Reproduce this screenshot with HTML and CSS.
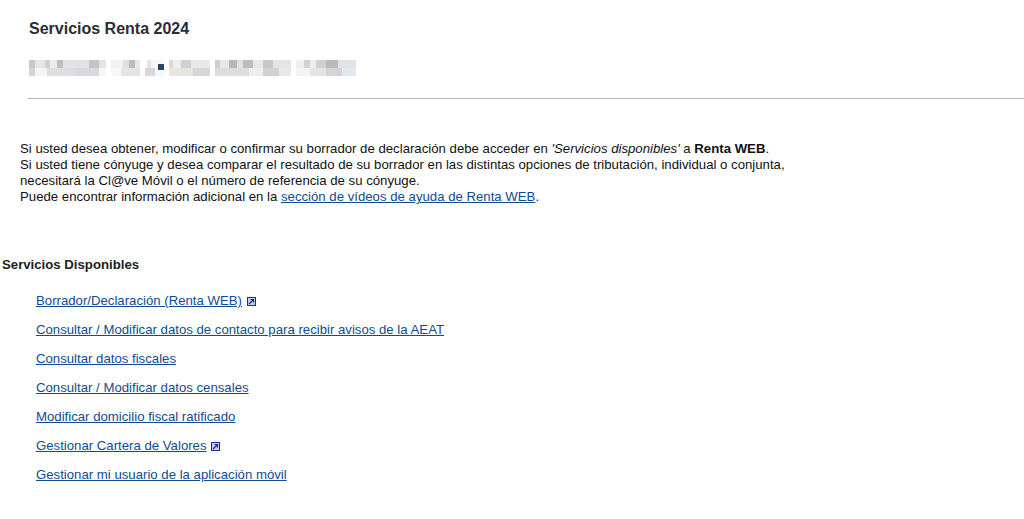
FILE: index.html
```html
<!DOCTYPE html>
<html lang="en">
<head>
  <meta charset="UTF-8" />
  <title>Servicios Renta 2024</title>
  <link rel="stylesheet" href="styles.css">
</head>
<body>
  <header class="head">
    <h1>Servicios Renta 2024</h1>
    <div class="user" aria-hidden="true">
      <span class="blur b1"></span>
      <span class="blur b2"></span>
      <span class="blur b3"><span class="dot"></span></span>
      <span class="blur b4"></span>
      <span class="blur b5"></span>
      <span class="blur b6"></span>
    </div>
  </header>

  <div class="intro">
    Si usted desea obtener, modificar o confirmar su borrador de declaración debe acceder en <em>'Servicios disponibles'</em> a <strong>Renta WEB</strong>.<br>
    Si usted tiene cónyuge y desea comparar el resultado de su borrador en las distintas opciones de tributación, individual o conjunta,<br>
    necesitará la Cl@ve Móvil o el número de referencia de su cónyuge.<br>
    Puede encontrar información adicional en la <a href="#">sección de vídeos de ayuda de Renta WEB</a>.
  </div>

  <h2>Servicios Disponibles</h2>

  <ul class="services">
    <li><a href="#">Borrador/Declaración (Renta WEB)</a>
      <svg class="ext" viewBox="0 0 9 9"><rect x="0.5" y="0.5" width="8" height="8" fill="#c9cbe8" stroke="#1c2f8c"/><path d="M2 7 L6.5 2.5 M3.5 2.5 H6.5 V5.5" fill="none" stroke="#1c2f8c" stroke-width="1.2"/></svg>
    </li>
    <li><a href="#">Consultar / Modificar datos de contacto para recibir avisos de la AEAT</a></li>
    <li><a href="#">Consultar datos fiscales</a></li>
    <li><a href="#">Consultar / Modificar datos censales</a></li>
    <li><a href="#">Modificar domicilio fiscal ratificado</a></li>
    <li><a href="#">Gestionar Cartera de Valores</a>
      <svg class="ext" viewBox="0 0 9 9"><rect x="0.5" y="0.5" width="8" height="8" fill="#c9cbe8" stroke="#1c2f8c"/><path d="M2 7 L6.5 2.5 M3.5 2.5 H6.5 V5.5" fill="none" stroke="#1c2f8c" stroke-width="1.2"/></svg>
    </li>
    <li><a href="#">Gestionar mi usuario de la aplicación móvil</a></li>
  </ul>
</body>
</html>
```

FILE: styles.css
```css
body {
  margin: 0;
  background: #ffffff;
  font-family: "Liberation Sans", Arial, sans-serif;
  font-size: 13.2px;
  color: #111;
  overflow: hidden;
}

.head {
  margin-left: 28px;
  padding-top: 20px;
  height: 78px;
  border-bottom: 1px solid #b5b5b5;
}

h1 {
  margin: 0 0 0 1px;
  font-size: 16px;
  line-height: 18px;
  font-weight: bold;
  color: #2b2d33;
}

.user {
  display: flex;
  gap: 5px;
  margin-top: 22px;
  margin-left: 1px;
  height: 16px;
}

.blur {
  display: block;
  position: relative;
  height: 16px;
  background-color: #eceded;
  background-repeat: no-repeat;
  background-size: 100% 50%;
  background-position: 0 0, 0 100%;
  filter: blur(0.7px);
}

.b1 {
  width: 77px;
  background-image:
    linear-gradient(90deg, #c8c8ca 0 6px, #e6e6e8 6px 16px, #cfcfd0 16px 21px, #ececee 21px 28px, #bdbdc0 28px 34px, #e2e3e6 34px 60px, #c4c4c4 60px 70px, #e4e4e4 70px),
    linear-gradient(90deg, #d4d4d6 0 6px, #f4f4f4 6px 18px, #dedee0 18px 45px, #d8d8dc 45px 70px, #f6f6f6 70px);
}

.b2 {
  width: 29px;
  background-image:
    linear-gradient(90deg, #f2f2f2 0 12px, #dedede 12px 18px, #bdbdbf 18px 24px, #e6e6e6 24px),
    linear-gradient(90deg, #f8f8f8 0 10px, #e4e4e6 10px 29px);
}

.b3 {
  width: 19px;
  background-image:
    linear-gradient(90deg, #fff 0 2px, #e4e4e4 2px 6px, #f8f8f8 6px),
    linear-gradient(90deg, #d8d8da 0 10px, #f6f8fa 10px);
}

.dot {
  position: absolute;
  left: 13px;
  top: 4px;
  width: 6px;
  height: 6px;
  background: #24476a;
}

.b4 {
  width: 41px;
  background-image:
    linear-gradient(90deg, #dcd8d2 0 4px, #eeeeee 4px 12px, #d0d0d2 12px 22px, #e8e8e8 22px),
    linear-gradient(90deg, #e8e4de 0 24px, #d6d6d8 24px 41px);
}

.b5 {
  width: 76px;
  background-image:
    linear-gradient(90deg, #cfcfd0 0 5px, #e8e8ea 5px 14px, #b8b6b6 14px 22px, #e6e0dc 22px 28px, #bcbcbe 28px 38px, #e8e8e8 38px 48px, #c6c8c8 48px 58px, #e4e4e6 58px),
    linear-gradient(90deg, #dcdcde 0 34px, #eeeeee 34px 48px, #d2d2d4 48px 64px, #e8e8e8 64px);
}

.b6 {
  width: 60px;
  background-image:
    linear-gradient(90deg, #f0efe8 0 8px, #d2d2d2 8px 14px, #eeeeee 14px 20px, #d0d0d2 20px 30px, #bdb8b6 30px 42px, #dfe4ea 42px),
    linear-gradient(90deg, #f4f4f2 0 14px, #e4e4e4 14px 30px, #d4d4d6 30px 46px, #e4e8ec 46px);
}

.intro {
  margin: 42px 0 0 20px;
  line-height: 16px;
}

a {
  color: #0f4c92;
  text-decoration: underline;
}

h2 {
  margin: 52px 0 0 2px;
  font-size: 13.2px;
  line-height: 16px;
  font-weight: bold;
  color: #222;
}

.services {
  list-style: none;
  margin: 20px 0 0 36px;
  padding: 0;
  line-height: 16px;
}

.services li {
  margin-bottom: 13px;
}

.ext {
  width: 9px;
  height: 9px;
  margin-left: 1px;
  vertical-align: -1px;
}
```
